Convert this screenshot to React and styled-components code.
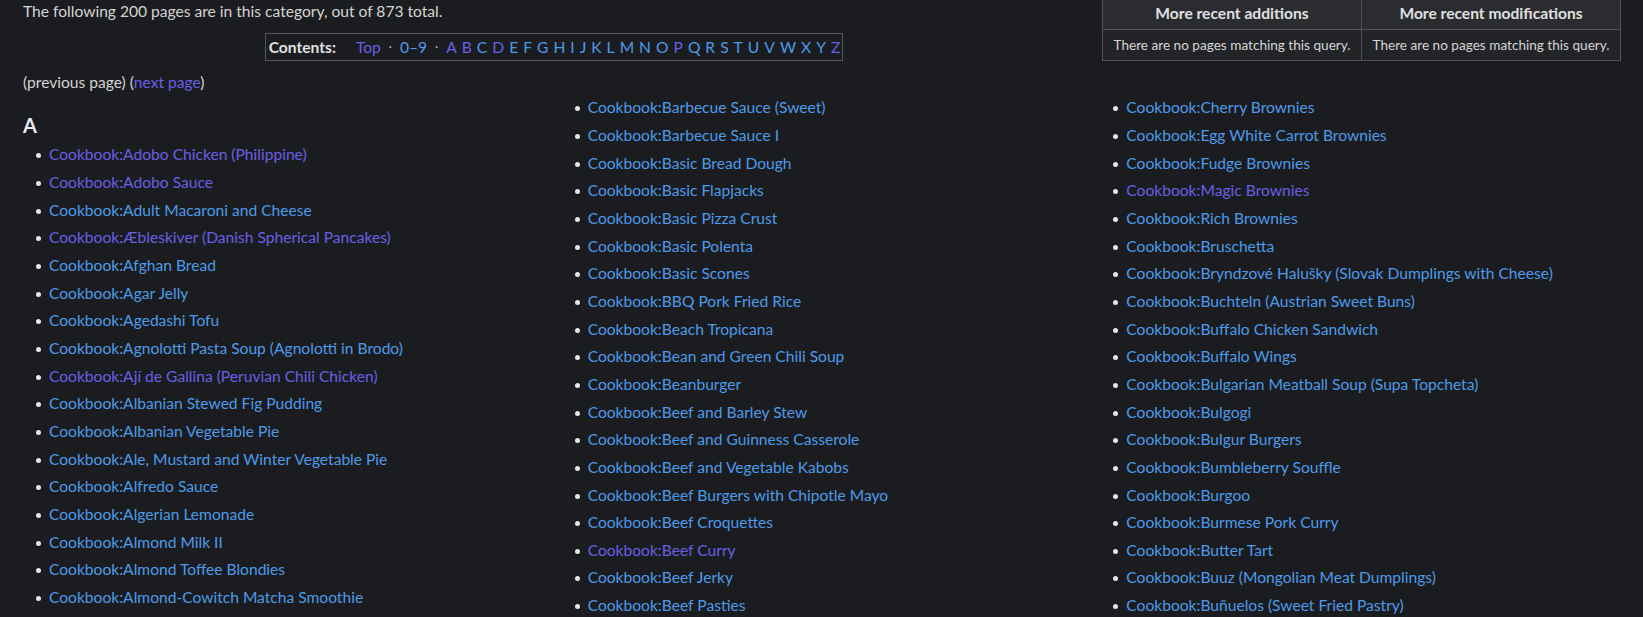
import React from 'react';
import styled, { createGlobalStyle } from 'styled-components';

const GlobalStyle = createGlobalStyle`
  html, body {
    margin: 0;
    padding: 0;
    overflow: hidden;
    background: #1b1c1f;
  }
  body {
    font-family: Lato, "Liberation Sans", sans-serif;
    font-size: 15.6px;
    color: #d4d4d4;
  }
`;

const Page = styled.div`
  padding: 0 22px 0 23px;
  margin-top: -2px;
`;

const Top = styled.div`
  display: flex;
  align-items: flex-start;
`;

const Intro = styled.div`
  flex: 1;
  min-width: 0;
`;

const Line = styled.p`
  margin: 0;
  line-height: 27.65px;
`;

const TocWrap = styled.div`
  text-align: center;
  margin: 7px 0 8px;
`;

const Toc = styled.div`
  display: inline-flex;
  align-items: center;
  gap: 5px;
  border: 1px solid #54565a;
  padding: 0 2px 0 3px;
  line-height: 26px;
`;

const TocLabel = styled.b`
  color: #e2e2e2;
  margin-right: 15px;
`;

const Dot = styled.span`
  color: #bdbdbd;
  font-size: 12px;
  margin: 0 3px;
`;

const Link = styled.a`
  color: ${p => (p.$visited ? '#6a5fe4' : '#4d9be8')};
  text-decoration: none;
`;

const Table = styled.table`
  margin: -3px 0 0 17px;
  border-collapse: collapse;
  background: #222427;
  flex: none;
`;

const Th = styled.th`
  border: 1px solid #4f5256;
  background: #2a2c30;
  color: #e0e0e0;
  font-weight: 700;
  padding: 0 7px;
  height: 33px;
  width: 244px;
  text-align: center;
  white-space: nowrap;
`;

const Td = styled.td`
  border: 1px solid #4f5256;
  font-size: 13.6px;
  padding: 0 7px;
  height: 30px;
  text-align: center;
  white-space: nowrap;
  color: #d6d6d6;
`;

const Columns = styled.div`
  display: grid;
  grid-template-columns: repeat(3, 1fr);
  column-gap: 18px;
  margin-top: -2px;
`;

const Column = styled.div`
  min-width: 0;
`;

const Heading = styled.h3`
  margin: 18px 0 3px;
  font-size: 20px;
  line-height: 26px;
  font-weight: 700;
  color: #ececec;
`;

const List = styled.ul`
  margin: 0;
  padding: 0 0 0 26px;
  list-style: none;
`;

const Item = styled.li`
  position: relative;
  line-height: 27.65px;
  white-space: nowrap;
  &::before {
    content: '';
    position: absolute;
    left: -13px;
    top: 12px;
    width: 5px;
    height: 5px;
    border-radius: 50%;
    background: #e6e6e6;
  }
`;

const colA = [
  ['Adobo Chicken (Philippine)', true],
  ['Adobo Sauce', true],
  ['Adult Macaroni and Cheese'],
  ['Æbleskiver (Danish Spherical Pancakes)', true],
  ['Afghan Bread'],
  ['Agar Jelly'],
  ['Agedashi Tofu'],
  ['Agnolotti Pasta Soup (Agnolotti in Brodo)'],
  ['Ají de Gallina (Peruvian Chili Chicken)', true],
  ['Albanian Stewed Fig Pudding'],
  ['Albanian Vegetable Pie'],
  ['Ale, Mustard and Winter Vegetable Pie'],
  ['Alfredo Sauce'],
  ['Algerian Lemonade'],
  ['Almond Milk II'],
  ['Almond Toffee Blondies'],
  ['Almond-Cowitch Matcha Smoothie'],
];

const colB = [
  ['Barbecue Sauce (Sweet)'],
  ['Barbecue Sauce I'],
  ['Basic Bread Dough'],
  ['Basic Flapjacks'],
  ['Basic Pizza Crust'],
  ['Basic Polenta'],
  ['Basic Scones'],
  ['BBQ Pork Fried Rice'],
  ['Beach Tropicana'],
  ['Bean and Green Chili Soup'],
  ['Beanburger'],
  ['Beef and Barley Stew'],
  ['Beef and Guinness Casserole'],
  ['Beef and Vegetable Kabobs'],
  ['Beef Burgers with Chipotle Mayo'],
  ['Beef Croquettes'],
  ['Beef Curry', true],
  ['Beef Jerky'],
  ['Beef Pasties'],
];

const colC = [
  ['Cherry Brownies'],
  ['Egg White Carrot Brownies'],
  ['Fudge Brownies'],
  ['Magic Brownies', true],
  ['Rich Brownies'],
  ['Bruschetta'],
  ['Bryndzové Halušky (Slovak Dumplings with Cheese)'],
  ['Buchteln (Austrian Sweet Buns)'],
  ['Buffalo Chicken Sandwich'],
  ['Buffalo Wings'],
  ['Bulgarian Meatball Soup (Supa Topcheta)'],
  ['Bulgogi'],
  ['Bulgur Burgers'],
  ['Bumbleberry Souffle'],
  ['Burgoo'],
  ['Burmese Pork Curry'],
  ['Butter Tart'],
  ['Buuz (Mongolian Meat Dumplings)'],
  ['Buñuelos (Sweet Fried Pastry)'],
];

const letters = 'ABCDEFGHIJKLMNOPQRSTUVWXYZ'.split('');
const visitedLetters = ['A', 'B', 'D', 'P', 'Z'];

function Recipes({ items }) {
  return (
    <List>
      {items.map(([name, visited], i) => (
        <Item key={i}>
          <Link href="#" $visited={visited}>Cookbook:{name}</Link>
        </Item>
      ))}
    </List>
  );
}

export default function App() {
  return (
    <Page>
      <GlobalStyle />
      <Top>
        <Intro>
          <Line>The following 200 pages are in this category, out of 873 total.</Line>
          <TocWrap>
            <Toc>
              <TocLabel>Contents:</TocLabel>
              <Link href="#" $visited>Top</Link>
              <Dot>·</Dot>
              <Link href="#">0–9</Link>
              <Dot>·</Dot>
              {letters.map(l => (
                <Link key={l} href="#" $visited={visitedLetters.includes(l)}>{l}</Link>
              ))}
            </Toc>
          </TocWrap>
          <Line>
            (previous page) (<Link href="#" $visited>next page</Link>)
          </Line>
        </Intro>
        <Table>
          <thead>
            <tr>
              <Th>More recent additions</Th>
              <Th>More recent modifications</Th>
            </tr>
          </thead>
          <tbody>
            <tr>
              <Td>There are no pages matching this query.</Td>
              <Td>There are no pages matching this query.</Td>
            </tr>
          </tbody>
        </Table>
      </Top>
      <Columns>
        <Column>
          <Heading>A</Heading>
          <Recipes items={colA} />
        </Column>
        <Column>
          <Recipes items={colB} />
        </Column>
        <Column>
          <Recipes items={colC} />
        </Column>
      </Columns>
    </Page>
  );
}
